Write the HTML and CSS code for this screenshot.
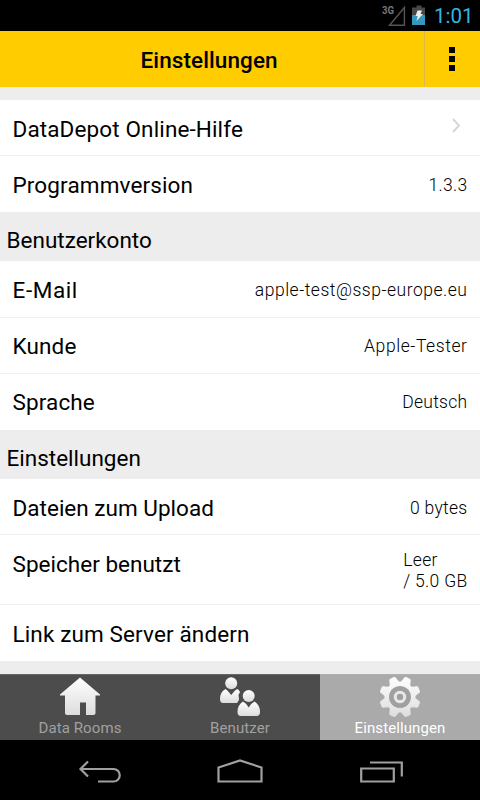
FILE: index.html
```html
<!DOCTYPE html>
<html lang="de">
<head>
<meta charset="utf-8">
<title>Einstellungen</title>
<link rel="stylesheet" href="styles.css">
</head>
<body>
<div class="status">
  <svg width="50" height="31" viewBox="0 0 50 31">
    <text class="net" x="1" y="14" textLength="12" lengthAdjust="spacingAndGlyphs">3G</text>
    <path d="M8.500 25.200H23.400V7.500Z" fill="none" stroke="#555" stroke-width="1.400"/>
    <path d="M31 7.500h4.500v-2h5v2H44v7.500H31z" fill="#484848"/>
    <path d="M31 15h13v10H31z" fill="#3497bd"/>
    <path d="M36.500 10.500h4.500l-1.500 3.500h2.500L35.500 21l1.200-5H34.500z" fill="#eee"/>
  </svg>
  <span class="clock">1:01</span>
</div>
<header class="bar">
  <h1>Einstellungen</h1>
  <div class="menu"><i></i><i></i><i></i></div>
</header>
<main class="list">
  <div class="row"><span>DataDepot Online-Hilfe</span>
    <svg class="chevron" width="9" height="16" viewBox="0 0 9 16"><path d="M1 1L7 7.500L1 14" fill="none" stroke="#d6d6d6" stroke-width="1.900"/></svg>
  </div>
  <div class="row last"><span>Programmversion</span><b>1.3.3</b></div>
  <h2>Benutzerkonto</h2>
  <div class="row tall"><span class="wide">E-Mail</span><b class="mail">apple-test@ssp-europe.eu</b></div>
  <div class="row raised"><span>Kunde</span><b class="customer">Apple-Tester</b></div>
  <div class="row last raised"><span>Sprache</span><b>Deutsch</b></div>
  <h2>Einstellungen</h2>
  <div class="row"><span class="tight">Dateien zum Upload</span><b>0 bytes</b></div>
  <div class="row storage"><span class="tight">Speicher benutzt</span><b>Leer<br>/ 5.0 GB</b></div>
  <div class="row last"><span>Link zum Server ändern</span></div>
</main>
<nav class="tabs">
  <div class="tab">
    <svg width="42" height="42" viewBox="0 0 42 42">
      <defs><linearGradient id="g" x1="0" y1="0" x2="0" y2="1"><stop offset="0" stop-color="#fff"/><stop offset="1" stop-color="#dcdcdc"/></linearGradient></defs>
      <path d="M21 .5L41 17.500V18.500H36.500V36q0 2-2 2H27V25.500H21V38H8q-2 0-2-2V18.500H1V17.500Z" fill="url(#g)"/>
    </svg>
    <span>Data Rooms</span>
  </div>
  <div class="tab">
    <svg width="42" height="42" viewBox="0 0 42 42">
      <g fill="url(#g)">
        <circle cx="12.200" cy="6.200" r="6"/>
        <path d="M6.500 12Q9 13.500 12.200 18Q15.500 13.500 18 12Q20 12.500 21 15L19.500 18Q20 21 20 23L18 26H4Q1 26 1 22Q1 15 6.500 12Z"/>
        <circle cx="29.700" cy="19" r="6"/>
        <path d="M24 24.500Q27 26 29.700 30.500Q32.500 26 35.500 24.500Q41 28 41 35Q41 39 37.500 39H22Q18.500 39 18.500 35Q18.500 28 24 24.500Z"/>
      </g>
    </svg>
    <span>Benutzer</span>
  </div>
  <div class="tab active">
    <svg width="42" height="42" viewBox="-21 -20 42 42">
      <defs>
        <path id="tooth" d="M-5.500-13L-3.500-19.500Q-3.200-20.700-2-20.700H2Q3.200-20.700 3.500-19.500L5.500-13Z"/>
        <mask id="gear" maskUnits="userSpaceOnUse" x="-21" y="-21" width="42" height="42">
          <g fill="#fff">
            <circle r="15.500"/>
            <use href="#tooth" transform="rotate(22.500)"/><use href="#tooth" transform="rotate(67.500)"/>
            <use href="#tooth" transform="rotate(112.500)"/><use href="#tooth" transform="rotate(157.500)"/>
            <use href="#tooth" transform="rotate(202.500)"/><use href="#tooth" transform="rotate(247.500)"/>
            <use href="#tooth" transform="rotate(292.500)"/><use href="#tooth" transform="rotate(337.500)"/>
          </g>
          <circle r="10.800" fill="#000"/>
        </mask>
      </defs>
      <path d="M-21-21H21V21H-21Z" fill="url(#g)" mask="url(#gear)"/>
      <circle r="10.800" fill="#a0a0a0"/>
      <circle r="4.700" fill="none" stroke="#e8e8e8" stroke-width="3"/>
    </svg>
    <span>Einstellungen</span>
  </div>
</nav>
<footer class="nav">
  <svg width="480" height="60" viewBox="0 0 480 60" fill="none" stroke="#a0a0a0" stroke-width="2.200">
    <path d="M88 21.500L80.500 29L88 36.500M80.500 29H113.500a6.200 6.200 0 0 1 0 12.500H98"/>
    <path d="M218.500 41.500V27.500L240 20.500L261.500 27.500V41.500Z"/>
    <path d="M361.200 28.500H393.800V41.500H361.200ZM370 22.500H401.800V36.500"/>
  </svg>
</footer>
</body>
</html>
```

FILE: styles.css
```css
* { box-sizing: border-box; }
body { margin: 0; width: 480px; height: 800px; display: flex; flex-direction: column; overflow: hidden; background: #ededed; color: #000; font-family: Roboto, sans-serif; }
h1, h2 { margin: 0; }
.status { height: 31px; background: #000; display: flex; justify-content: flex-end; padding-right: 8px; flex: none; }
.status svg { margin-right: 3px; }
.net { font-size: 11px; font-weight: 700; fill: #777; }
.clock { width: 38px; color: #33b5e5; font-size: 20.500px; line-height: 32px; white-space: nowrap; }
.bar { height: 56px; background: #fc0; display: flex; flex: none; }
.bar h1 { flex: 1; padding-left: 140.500px; font-size: 22.500px; line-height: 58px; font-weight: 500; letter-spacing: .1px; }
.menu { width: 56px; padding-right: 1px; border-left: 1px solid #e0b84a; display: flex; flex-direction: column; align-items: center; gap: 3px; padding-top: 16px; }
.menu i { width: 6px; height: 6px; background: #000; }
.list { height: 587px; flex: none; padding-top: 13px; }
.row { height: 56px; background: #fff; border-bottom: 1px solid #f0f0f0; padding: 0 12.500px 0 12.500px; display: flex; justify-content: space-between; font-size: 22.500px; line-height: 58px; letter-spacing: .13px; }
.row .wide { letter-spacing: .6px; }
.row .tight { letter-spacing: .02px; }
.row b { font-size: 17.500px; font-weight: 300; line-height: 58px; color: #000; letter-spacing: .3px; }
.row b.mail { letter-spacing: .52px; }
.row b.customer { letter-spacing: .58px; }
.row.tall { height: 57px; }
.row.raised { line-height: 56px; }
.row.raised b { line-height: 57px; }
.row.last { border-bottom-color: #fff; }
.row.storage { height: 70px; }
.row.storage b { line-height: 21px; padding-top: 15px; }
.chevron { margin: 18px 7px 0 0; }
.list h2 { height: 49px; font-size: 22.500px; font-weight: 400; line-height: 57px; padding-left: 6.500px; letter-spacing: 0; }
.tabs { height: 66px; display: grid; grid-template-columns: repeat(3, 1fr); background: #4c4c4c; flex: none; }
.tab { display: flex; flex-direction: column; align-items: center; padding-top: 2px; border-top: 1px solid #666; color: #a0a0a0; font-size: 15px; line-height: 19px; letter-spacing: .1px; }
.tab svg { flex: none; }
.active { background: #aaa; color: #fff; border-top-color: #b0b0b0; }
.nav { height: 60px; background: #000; flex: none; }
.nav svg { display: block; }
```
